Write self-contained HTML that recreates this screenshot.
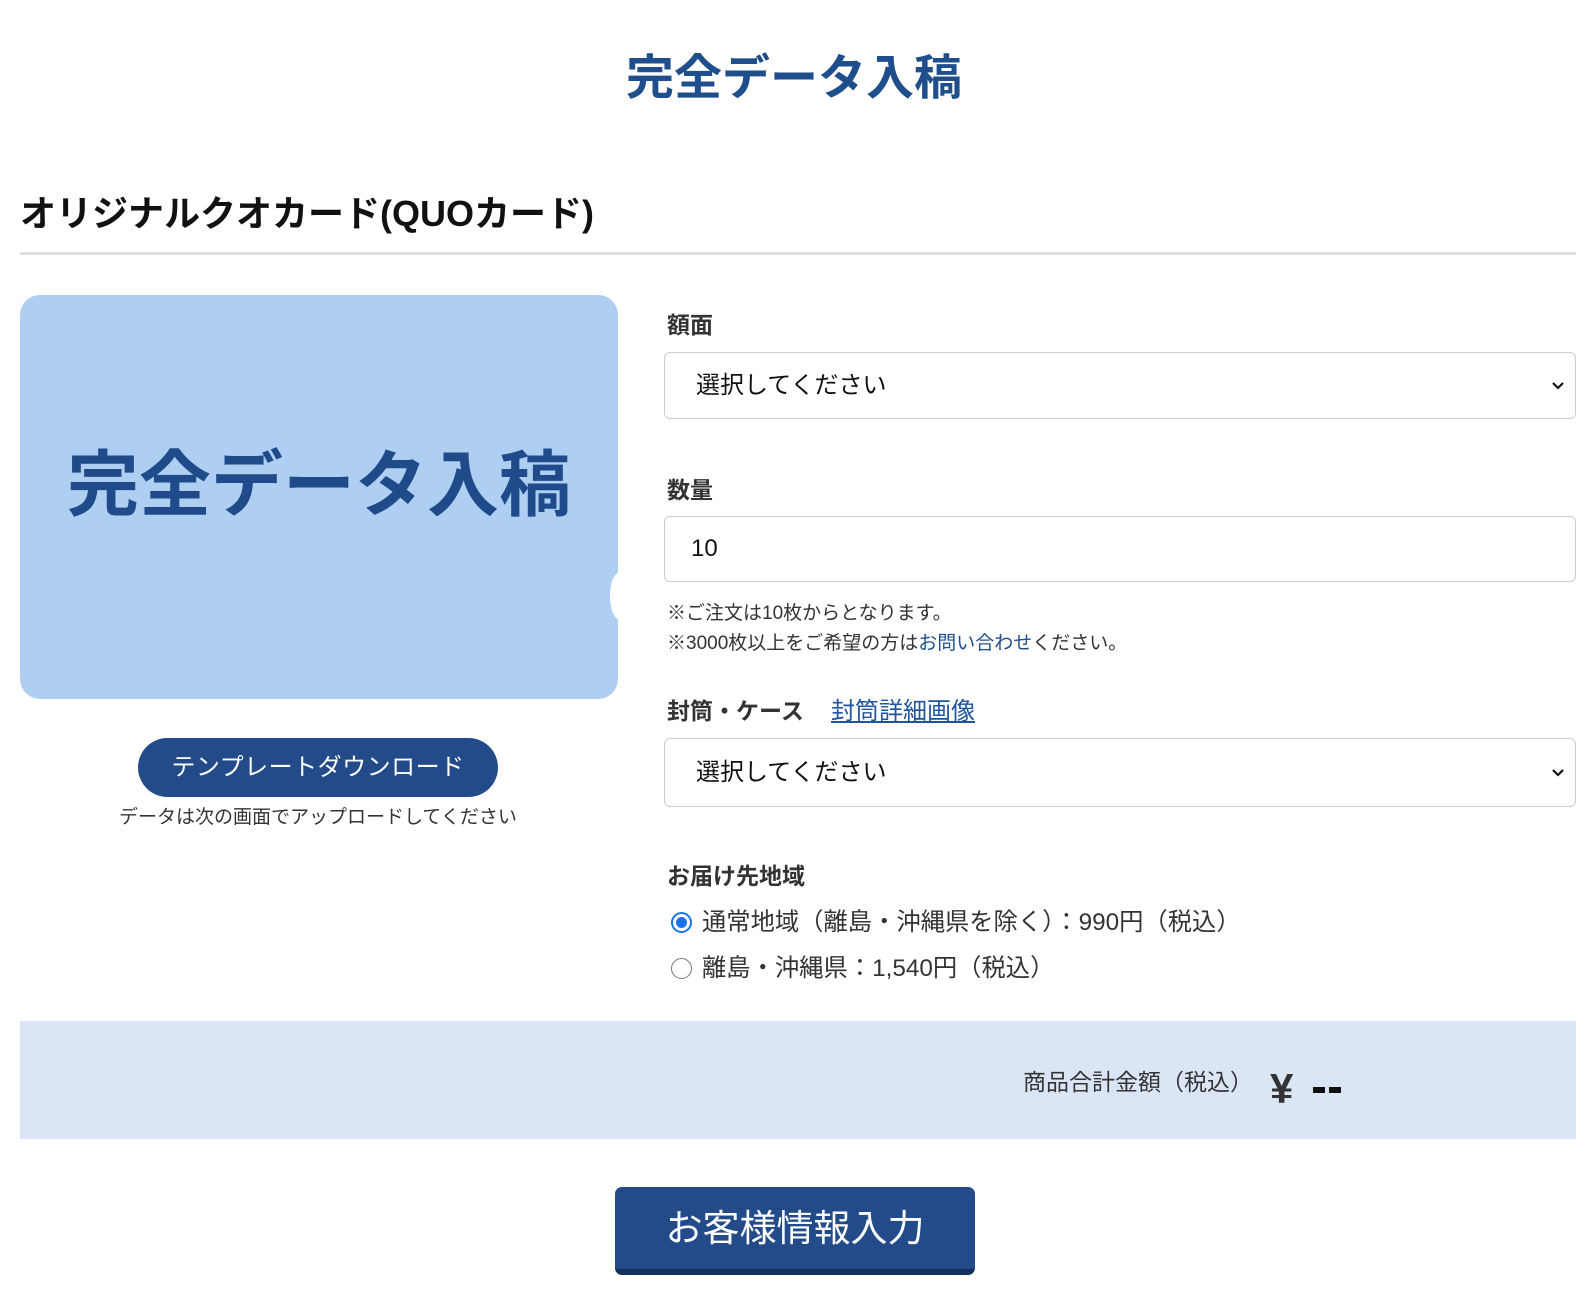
<!DOCTYPE html>
<html><head><meta charset="utf-8"><style>
*{margin:0;padding:0;box-sizing:border-box}
body{width:1588px;height:1296px;background:#fff;font-family:"Liberation Sans","Noto Sans CJK JP",sans-serif;color:#333;position:relative;overflow:hidden}
.a{position:absolute;white-space:nowrap;line-height:1}
.title{left:0;width:1588px;text-align:center;top:55px;font-size:48px;font-weight:bold;color:#1f4e8c}
.sub{left:20px;top:196px;font-size:36px;font-weight:bold;color:#111}
.rule{left:20px;top:252px;width:1556px;height:3px;background:#ddd;border-radius:2px}
.card{left:20px;top:295px;width:598px;height:404px;background:#aecff2;border-radius:20px}
.notch{left:610px;top:572px;width:20px;height:48px;background:#fff;border-radius:50%}
.ctext{left:20px;width:598px;text-align:center;top:450px;font-size:72px;font-weight:bold;color:#1f4b8a}
.dl{left:138px;top:738px;width:360px;height:59px;background:#234b8a;border-radius:30px;color:#fff;font-size:24px;display:flex;align-items:center;justify-content:center;letter-spacing:0.5px}
.cap{left:119px;width:360px;text-align:center;top:808px;font-size:19px;color:#333}
.lbl{font-size:23px;font-weight:bold;color:#333}
.box{left:664px;width:912px;border:1.5px solid #ccc;border-radius:6px;background:#fff;font-size:24px;color:#111;display:flex;align-items:center}
.chev{position:absolute;right:10px;top:50%;margin-top:-5px}
.note{left:667px;font-size:19px;color:#333}
.radio{left:671px;width:21px;height:21px;border-radius:50%}
.rt{left:702px;font-size:24.3px;color:#333}
.band{left:20px;top:1021px;width:1556px;height:118px;background:#dae6f6}
.btn{left:615px;top:1187px;width:360px;height:88px;background:#234b8a;border-radius:7px;border-bottom:6px solid #14305a;color:#fff;font-size:37px;display:flex;align-items:center;justify-content:center}
</style></head><body>
<div class="a title">完全データ入稿</div>
<div class="a sub">オリジナルクオカード(QUOカード)</div>
<div class="a rule"></div>

<div class="a card"></div>
<div class="a notch"></div>
<div class="a ctext">完全データ入稿</div>
<div class="a dl">テンプレートダウンロード</div>
<div class="a cap">データは次の画面でアップロードしてください</div>

<div class="a lbl" style="left:667px;top:314px">額面</div>
<div class="a box" style="top:352px;height:67px;padding-left:31px">選択してください<svg class="chev" width="14" height="10" viewBox="0 0 14 10"><path d="M2 2l5 5 5-5" fill="none" stroke="#111" stroke-width="2.2"/></svg></div>

<div class="a lbl" style="left:667px;top:479px">数量</div>
<div class="a box" style="top:516px;height:66px;padding-left:26px">10</div>
<div class="a note" style="top:604px">※ご注文は10枚からとなります。</div>
<div class="a note" style="top:634px">※3000枚以上をご希望の方は<span style="color:#1f4e8c">お問い合わせ</span>ください。</div>

<div class="a lbl" style="left:667px;top:700px">封筒・ケース</div>
<div class="a" style="left:831px;top:700px;font-size:24px;color:#1f55a0;text-decoration:underline">封筒詳細画像</div>
<div class="a box" style="top:738px;height:69px;padding-left:31px">選択してください<svg class="chev" width="14" height="10" viewBox="0 0 14 10"><path d="M2 2l5 5 5-5" fill="none" stroke="#111" stroke-width="2.2"/></svg></div>

<div class="a lbl" style="left:667px;top:865px">お届け先地域</div>
<div class="a radio" style="top:912px;border:2px solid #1a73e8;background:#fff"><div style="position:absolute;left:3px;top:3px;width:11px;height:11px;border-radius:50%;background:#1a73e8"></div></div>
<div class="a rt" style="top:911px">通常地域（離島・沖縄県を除く）：990円（税込）</div>
<div class="a radio" style="top:958px;border:1.5px solid #777;background:#fff"></div>
<div class="a rt" style="top:957px">離島・沖縄県：1,540円（税込）</div>

<div class="a band"></div>
<div class="a" style="left:1023px;top:1071px;font-size:23px;color:#333">商品合計金額（税込）</div>
<div class="a" style="left:1270px;top:1068px;font-size:42px;font-weight:bold;color:#333">¥</div>
<div class="a" style="left:1313px;top:1087px;width:12px;height:6px;background:#111"></div>
<div class="a" style="left:1329px;top:1087px;width:12px;height:6px;background:#111"></div>

<div class="a btn">お客様情報入力</div>
</body></html>
